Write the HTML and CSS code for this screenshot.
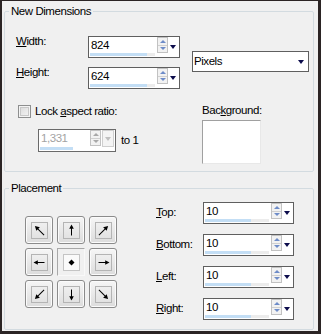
FILE: index.html
```html
<!DOCTYPE html>
<html>
<head>
<meta charset="utf-8">
<link rel="stylesheet" href="styles.css">
</head>
<body>
<div class="win">
  <fieldset class="grp g1">
    <legend>New Dimensions</legend>
    <div class="dims">
      <div class="dims-left">
        <div class="row r-w">
          <label class="lbl"><u>W</u>idth:</label>
          <div class="edit e92">
            <div class="field"><span class="val">824</span><div class="track"><div class="fill" style="width:88%"></div></div></div>
            <div class="spinner"><span class="sp up"></span><span class="sp dn"></span></div>
            <span class="drop"></span>
          </div>
        </div>
        <div class="row r-h">
          <label class="lbl"><u>H</u>eight:</label>
          <div class="edit e92">
            <div class="field"><span class="val">624</span><div class="track"><div class="fill" style="width:88%"></div></div></div>
            <div class="spinner"><span class="sp up"></span><span class="sp dn"></span></div>
            <span class="drop"></span>
          </div>
        </div>
        <div class="chk-row">
          <span class="chk"></span>
          <span class="chk-lbl">Lock <u>a</u>spect ratio:</span>
        </div>
        <div class="ratio-row">
          <div class="edit dis">
            <div class="field"><span class="val">1,331</span><div class="track"><div class="fill" style="width:68%"></div></div></div>
            <div class="spinner"><span class="sp up"></span><span class="sp dn"></span></div>
            <span class="dropbox"><span class="drop"></span></span>
          </div>
          <span class="to">to 1</span>
        </div>
      </div>
      <div class="dims-right">
        <div class="combo"><span class="combo-txt">Pixels</span><span class="drop"></span></div>
        <div class="bg-lbl">Bac<u>k</u>ground:</div>
        <div class="bg-box"></div>
      </div>
    </div>
  </fieldset>

  <fieldset class="grp g2">
    <legend>Placement</legend>
    <div class="place">
      <div class="pad">
        <div class="ab"><span class="ai"><svg viewBox="0 0 15 15"><g transform="rotate(-45 7.5 7.5)"><line x1="7.5" y1="14" x2="7.5" y2="4"/><polygon points="7.5,1 5,5.5 10,5.5"/></g></svg></span></div>
        <div class="ab"><span class="ai"><svg viewBox="0 0 15 15"><line x1="7.5" y1="12.5" x2="7.5" y2="4"/><polygon points="7.5,1.5 5.2,5.8 9.8,5.8"/></svg></span></div>
        <div class="ab"><span class="ai"><svg viewBox="0 0 15 15"><g transform="rotate(45 7.5 7.5)"><line x1="7.5" y1="14" x2="7.5" y2="4"/><polygon points="7.5,1 5,5.5 10,5.5"/></g></svg></span></div>
        <div class="ab"><span class="ai"><svg viewBox="0 0 15 15"><g transform="rotate(-90 7.5 7.5)"><line x1="7.5" y1="12.5" x2="7.5" y2="4"/><polygon points="7.5,1.5 5.2,5.8 9.8,5.8"/></g></svg></span></div>
        <div class="ab on"><span class="ai"><svg viewBox="0 0 15 15"><polygon points="7.5,4.5 10.5,7.5 7.5,10.5 4.5,7.5"/></svg></span></div>
        <div class="ab"><span class="ai"><svg viewBox="0 0 15 15"><g transform="rotate(90 7.5 7.5)"><line x1="7.5" y1="12.5" x2="7.5" y2="4"/><polygon points="7.5,1.5 5.2,5.8 9.8,5.8"/></g></svg></span></div>
        <div class="ab"><span class="ai"><svg viewBox="0 0 15 15"><g transform="rotate(-135 7.5 7.5)"><line x1="7.5" y1="14" x2="7.5" y2="4"/><polygon points="7.5,1 5,5.5 10,5.5"/></g></svg></span></div>
        <div class="ab"><span class="ai"><svg viewBox="0 0 15 15"><g transform="rotate(180 7.5 7.5)"><line x1="7.5" y1="12.5" x2="7.5" y2="4"/><polygon points="7.5,1.5 5.2,5.8 9.8,5.8"/></g></svg></span></div>
        <div class="ab"><span class="ai"><svg viewBox="0 0 15 15"><g transform="rotate(135 7.5 7.5)"><line x1="7.5" y1="14" x2="7.5" y2="4"/><polygon points="7.5,1 5,5.5 10,5.5"/></g></svg></span></div>
      </div>
      <div class="margins">
        <div class="mrow">
          <label class="mlbl"><u>T</u>op:</label>
          <div class="edit e91">
            <div class="field"><span class="val">10</span><div class="track"><div class="fill" style="width:72%"></div></div></div>
            <div class="spinner"><span class="sp up"></span><span class="sp dn"></span></div>
            <span class="drop"></span>
          </div>
        </div>
        <div class="mrow">
          <label class="mlbl"><u>B</u>ottom:</label>
          <div class="edit e91">
            <div class="field"><span class="val">10</span><div class="track"><div class="fill" style="width:72%"></div></div></div>
            <div class="spinner"><span class="sp up"></span><span class="sp dn"></span></div>
            <span class="drop"></span>
          </div>
        </div>
        <div class="mrow">
          <label class="mlbl"><u>L</u>eft:</label>
          <div class="edit e91">
            <div class="field"><span class="val">10</span><div class="track"><div class="fill" style="width:72%"></div></div></div>
            <div class="spinner"><span class="sp up"></span><span class="sp dn"></span></div>
            <span class="drop"></span>
          </div>
        </div>
        <div class="mrow">
          <label class="mlbl"><u>R</u>ight:</label>
          <div class="edit e91">
            <div class="field"><span class="val">10</span><div class="track"><div class="fill" style="width:72%"></div></div></div>
            <div class="spinner"><span class="sp up"></span><span class="sp dn"></span></div>
            <span class="drop"></span>
          </div>
        </div>
      </div>
    </div>
  </fieldset>
</div>
</body>
</html>
```

FILE: styles.css
```css
html, body {
  margin: 0;
  padding: 0;
  background: #f0f0f0;
}

body {
  font-family: "Liberation Sans", Arial, sans-serif;
  font-size: 11.5px;
  letter-spacing: -0.45px;
  line-height: 13px;
  color: #000;
}

u {
  text-decoration: underline;
  text-underline-offset: 1px;
}

.win {
  width: 321px;
  height: 334px;
  box-sizing: border-box;
  border-style: solid;
  border-color: #2b2424;
  border-width: 1px 3px 3px 2px;
  background: #f0f0f0;
  overflow: hidden;
}

.grp {
  margin: 0 4px 0 2px;
  padding: 0;
  border: 1px solid #d3dbe0;
  border-radius: 2px;
  min-width: 0;
}

.grp legend {
  margin-left: 4px;
  padding: 0 2px;
  line-height: 13px;
}

.g1 {
  margin-top: 4px;
  padding-bottom: 7px;
}

.g2 {
  margin-top: 10px;
  padding-bottom: 9px;
}

/* ---------- New Dimensions ---------- */
.dims {
  display: flex;
}

.dims-left {
  width: 176px;
  padding-left: 11px;
  display: flex;
  flex-direction: column;
}

.row {
  display: flex;
  align-items: flex-start;
}

.r-w { margin-top: 18px; }
.r-h { margin-top: 9px; }

.lbl {
  width: 72px;
  margin-top: -1px;
}

.chk-row {
  display: flex;
  align-items: flex-start;
  margin-top: 16px;
  margin-left: 2px;
}

.chk {
  width: 13px;
  height: 13px;
  box-sizing: border-box;
  border: 1px solid #8e8f8f;
  background: linear-gradient(135deg, #d8d8d8, #f7f7f7);
  box-shadow: inset 0 0 0 1px #f4f4f4, inset 0 0 0 2px #c8c8c8;
}

.chk-lbl {
  margin-left: 4px;
}

.ratio-row {
  display: flex;
  align-items: center;
  margin-top: 11px;
  margin-left: 22px;
}

.to {
  margin-left: 5px;
}

.dims-right {
  flex: 1;
  display: flex;
  flex-direction: column;
  align-items: flex-start;
}

.combo {
  margin-top: 33px;
  width: 117px;
  height: 21px;
  box-sizing: border-box;
  border: 1px solid #5f5f5f;
  background: #fff;
  display: flex;
  align-items: center;
  padding: 0 4px 0 1px;
}

.combo-txt {
  flex: 1;
}

.bg-lbl {
  margin-top: 32px;
  margin-left: 10px;
}

.bg-box {
  margin-top: 3px;
  margin-left: 10px;
  width: 59px;
  height: 44px;
  box-sizing: border-box;
  background: #fff;
  border-style: solid;
  border-width: 1px;
  border-color: #a0a0a0 #e8e8e8 #e8e8e8 #a0a0a0;
}

/* ---------- spin edit ---------- */
.edit {
  display: flex;
  align-items: flex-start;
  height: 22px;
  box-sizing: border-box;
  border: 1px solid #5f5f5f;
  background: #fff;
  padding-right: 3px;
}

.e92 { width: 92px; }
.e91 { width: 91px; }

.field {
  flex: 1;
  align-self: stretch;
  display: flex;
  flex-direction: column;
  justify-content: space-between;
  padding: 2px 0 1px 1px;
  min-width: 0;
}

.val {
  padding-left: 1px;
  line-height: 13px;
}

.track {
  height: 3px;
  background: #ececec;
}

.fill {
  height: 3px;
  background: #c3def5;
}

.spinner {
  width: 11px;
  height: 16px;
  margin-left: 2px;
  box-sizing: border-box;
  border: 1px solid #c2c2c2;
  background: #f2f2f2;
  display: flex;
  flex-direction: column;
}

.sp {
  flex: 1;
  display: flex;
  align-items: center;
  justify-content: center;
}

.sp.up {
  border-bottom: 1px solid #d0d0d0;
}

.sp.up::before {
  content: "";
  border-left: 3px solid transparent;
  border-right: 3px solid transparent;
  border-bottom: 3px solid #6e8cc8;
}

.sp.dn::before {
  content: "";
  border-left: 3px solid transparent;
  border-right: 3px solid transparent;
  border-top: 3px solid #6e8cc8;
}

.drop {
  align-self: center;
  margin-left: 2px;
  width: 0;
  height: 0;
  border-left: 3.5px solid transparent;
  border-right: 3.5px solid transparent;
  border-top: 4px solid #0c0c4c;
}

.combo .drop {
  margin-left: 0;
}

.edit.dis {
  width: 78px;
  height: 23px;
  border-color: #6a6a6a;
  padding-right: 1px;
}

.edit.dis .val {
  color: #a3a3a3;
}

.edit.dis .fill {
  background: #c3def5;
}

.edit.dis .track {
  background: transparent;
}

.edit.dis .sp.up::before {
  border-bottom-color: #a8a8a8;
}

.edit.dis .sp.dn::before {
  border-top-color: #a8a8a8;
}

.dropbox {
  margin-left: 1px;
  width: 12px;
  height: 17px;
  box-sizing: border-box;
  border: 1px solid #cfcfcf;
  background: #f4f4f4;
  display: flex;
  align-items: center;
  justify-content: center;
}

.dropbox .drop {
  margin-left: 0;
  border-top-color: #c0c0c0;
}

/* ---------- Placement ---------- */
.place {
  display: flex;
  align-items: flex-start;
  padding-left: 20px;
}

.pad {
  margin-top: 21px;
  display: grid;
  grid-template-columns: repeat(3, 28px);
  grid-auto-rows: 28px;
  gap: 4px;
}

.ab {
  box-sizing: border-box;
  border: 1px solid #8b8b8b;
  border-radius: 3px;
  background: linear-gradient(#f6f6f6, #dcdcdc);
  box-shadow: inset 0 0 0 1px #fbfbfb;
  display: flex;
  align-items: center;
  justify-content: center;
}

.ai {
  width: 17px;
  height: 17px;
  box-sizing: border-box;
  border: 1px solid #b4b4b4;
  background: linear-gradient(#efefef, #e2e2e2);
  display: flex;
  align-items: center;
  justify-content: center;
}

.ai svg {
  width: 15px;
  height: 15px;
  display: block;
}

.ai svg line {
  stroke: #000;
  stroke-width: 1;
}

.ai svg polygon {
  fill: #000;
}

.ab.on {
  border-radius: 0;
  border-color: #a8a8a8 #f8f8f8 #f8f8f8 #a8a8a8;
  background: #f0f0f0;
  box-shadow: none;
}

.ab.on .ai {
  background: #fafafa;
  border-color: #c4c4c4;
}

.margins {
  margin-left: 39px;
  margin-top: 7px;
  display: flex;
  flex-direction: column;
  gap: 10px;
}

.mrow {
  display: flex;
  align-items: flex-start;
}

.mlbl {
  width: 47px;
  margin-top: 4px;
}
```
